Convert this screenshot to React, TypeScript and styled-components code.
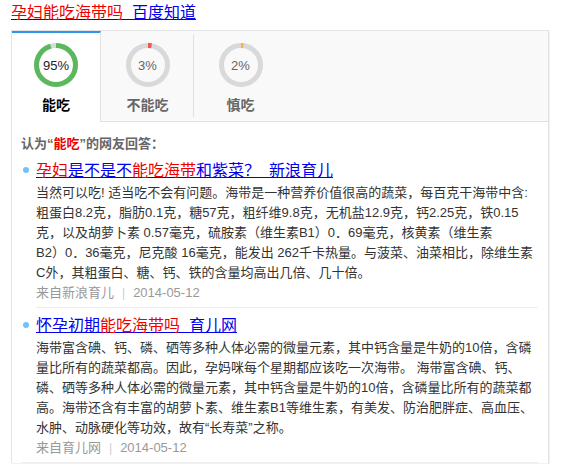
import React from "react";
import styled, { createGlobalStyle } from "styled-components";

const GlobalStyle = createGlobalStyle`
  html, body {
    margin: 0;
    padding: 0;
    background: #fff;
    font-family: "Liberation Sans", Arial, "Noto Sans CJK SC", sans-serif;
  }
`;

const Page = styled.div`
  width: 570px;
  height: 469px;
  overflow: hidden;
  padding: 0 0 0 11px;
  box-sizing: border-box;
`;

const PageTitle = styled.a`
  display: block;
  height: 30px;
  padding-top: 3px;
  box-sizing: border-box;
  font-size: 16px;
  line-height: 20px;
  color: #00e;
  text-decoration: underline;
`;

const Hit = styled.em`
  font-style: normal;
  color: #e00;
`;

const Panel = styled.div`
  width: 538px;
  border: 1px solid #e3e3e3;
  border-bottom: none;
  box-shadow: 1px 1px 1px rgba(0, 0, 0, 0.05);
  box-sizing: border-box;
`;

const TabBar = styled.div`
  display: flex;
  height: 91px;
  background: #f9f9f9;
  border-bottom: 1px solid #e1e1e1;
  box-sizing: border-box;
`;

const Tab = styled.div<{ $active?: boolean; $divided?: boolean }>`
  position: relative;
  width: ${(p) => (p.$active ? 89 : 93)}px;
  height: ${(p) => (p.$active ? 91 : 90)}px;
  box-sizing: border-box;
  display: flex;
  flex-direction: column;
  align-items: center;
  background: ${(p) => (p.$active ? "#fff" : "transparent")};
  border-top: ${(p) => (p.$active ? "2px solid #2e95ea" : "none")};
  border-right: ${(p) => (p.$active ? "1px solid #e1e1e1" : "none")};
  padding-top: ${(p) => (p.$active ? 10 : 12)}px;

  ${(p) =>
    p.$divided &&
    `
    &::after {
      content: "";
      position: absolute;
      right: 0;
      top: 3px;
      bottom: 4px;
      width: 1px;
      background: #e1e1e1;
    }
  `}
`;

const RingBox = styled.div`
  position: relative;
  width: 44px;
  height: 44px;
`;

const RingValue = styled.span<{ $active?: boolean }>`
  position: absolute;
  inset: 0;
  display: flex;
  align-items: center;
  justify-content: center;
  font-size: 13px;
  color: ${(p) => (p.$active ? "#222" : "#666")};
`;

const TabLabel = styled.div<{ $active?: boolean }>`
  margin-top: 8px;
  font-size: 14px;
  line-height: 20px;
  font-weight: bold;
  color: ${(p) => (p.$active ? "#000" : "#666")};
`;

const Body = styled.div`
  padding: 12px 10px 0 9px;
`;

const Lead = styled.div`
  font-size: 13px;
  line-height: 20px;
  font-weight: bold;
  color: #666;
  margin-bottom: 5px;
`;

const Answer = styled.div<{ $divided?: boolean }>`
  position: relative;
  padding: 0 0 5px 15px;
  margin-bottom: 6px;

  &::before {
    content: "";
    position: absolute;
    left: 2px;
    top: 8px;
    width: 6px;
    height: 6px;
    border-radius: 50%;
    background: #6cc4fa;
  }

  &::after {
    content: "";
    position: absolute;
    left: ${(p) => (p.$divided ? 15 : 0)}px;
    right: 0;
    bottom: 0;
    height: 1px;
    background: #eee;
  }
`;

const AnswerTitle = styled.a`
  display: block;
  font-size: 16px;
  line-height: 24px;
  color: #00e;
  text-decoration: underline;
  white-space: nowrap;
`;

const Summary = styled.div`
  font-size: 13px;
  line-height: 20px;
  color: #333;
  white-space: nowrap;
`;

const Source = styled.div`
  display: flex;
  align-items: center;
  font-size: 13px;
  line-height: 20px;
  color: #999;
`;

const Sep = styled.span`
  margin: 0 8px;
  color: #ccc;
  font-size: 12px;
`;

function Ring({ percent, color, active }: { percent: number; color: string; active?: boolean }) {
  const r = 19.5;
  const c = 2 * Math.PI * r;
  return (
    <RingBox>
      <svg width="44" height="44" viewBox="0 0 44 44">
        <circle cx="22" cy="22" r={r} fill="none" stroke="#d9d9d9" strokeWidth="5" />
        <circle
          cx="22"
          cy="22"
          r={r}
          fill="none"
          stroke={color}
          strokeWidth="5"
          strokeDasharray={`${(c * percent) / 100} ${c}`}
          transform="rotate(-90 22 22)"
        />
      </svg>
      <RingValue $active={active}>{percent}%</RingValue>
    </RingBox>
  );
}

export default function App() {
  return (
    <>
      <GlobalStyle />
      <Page>
        <PageTitle>
          <Hit>孕妇能吃海带吗</Hit>&nbsp;&nbsp;百度知道
        </PageTitle>
        <Panel>
          <TabBar>
            <Tab $active>
              <Ring percent={95} color="#5cb85c" active />
              <TabLabel $active>能吃</TabLabel>
            </Tab>
            <Tab $divided>
              <Ring percent={3} color="#f25555" />
              <TabLabel>不能吃</TabLabel>
            </Tab>
            <Tab>
              <Ring percent={2} color="#fbb33c" />
              <TabLabel>慎吃</TabLabel>
            </Tab>
          </TabBar>
          <Body>
            <Lead>
              认为“<Hit>能吃</Hit>”的网友回答：
            </Lead>
            <Answer $divided>
              <AnswerTitle>
                <Hit>孕妇</Hit>是不是不<Hit>能吃海带</Hit>和紫菜？&nbsp;&nbsp;新浪育儿
              </AnswerTitle>
              <Summary>
                当然可以吃! 适当吃不会有问题。海带是一种营养价值很高的蔬菜，每百克干海带中含:
                <br />
                粗蛋白8.2克，脂肪0.1克，糖57克，粗纤维9.8克，无机盐12.9克，钙2.25克，铁0.15
                <br />
                克，以及胡萝卜素 0.57毫克，硫胺素（维生素B1）0．69毫克，核黄素（维生素
                <br />
                B2）0．36毫克，尼克酸 16毫克，能发出 262千卡热量。与菠菜、油菜相比，除维生素
                <br />
                C外，其粗蛋白、糖、钙、铁的含量均高出几倍、几十倍。
              </Summary>
              <Source>
                来自新浪育儿<Sep>|</Sep>2014-05-12
              </Source>
            </Answer>
            <Answer>
              <AnswerTitle>
                怀孕初期<Hit>能吃海带吗</Hit>&nbsp;&nbsp;育儿网
              </AnswerTitle>
              <Summary>
                海带富含碘、钙、磷、硒等多种人体必需的微量元素，其中钙含量是牛奶的10倍，含磷
                <br />
                量比所有的蔬菜都高。因此，孕妈咪每个星期都应该吃一次海带。 海带富含碘、钙、
                <br />
                磷、硒等多种人体必需的微量元素，其中钙含量是牛奶的10倍，含磷量比所有的蔬菜都
                <br />
                高。海带还含有丰富的胡萝卜素、维生素B1等维生素，有美发、防治肥胖症、高血压、
                <br />
                水肿、动脉硬化等功效，故有“长寿菜”之称。
              </Summary>
              <Source>
                来自育儿网<Sep>|</Sep>2014-05-12
              </Source>
            </Answer>
          </Body>
        </Panel>
      </Page>
    </>
  );
}
